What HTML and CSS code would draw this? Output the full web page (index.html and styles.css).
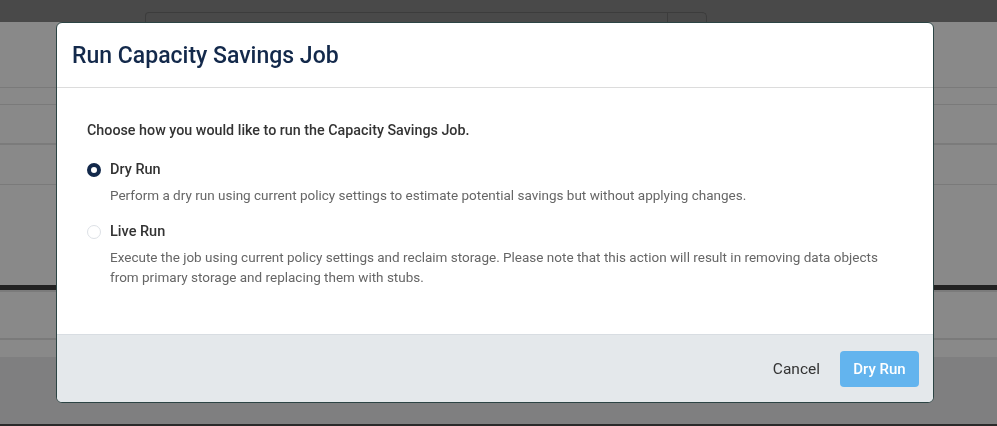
FILE: index.html
```html
<!DOCTYPE html>
<html lang="en">
<head>
    <meta charset="UTF-8">
    <meta name="viewport" content="width=device-width, initial-scale=1.0">
    <title>Run Capacity Savings Job</title>
    <link rel="stylesheet" href="styles.css">
</head>
<body>
    <!-- page behind the dialog -->
    <div class="app">
        <div class="topbar">
            <div class="search">
                <div class="search-field"></div>
                <div class="search-btn"></div>
            </div>
        </div>
        <div class="rows">
            <div class="row r1"></div>
            <div class="row r2"></div>
            <div class="row r3"></div>
            <div class="row r4"></div>
            <div class="row r5"></div>
            <div class="row r6"></div>
            <div class="row r7"></div>
        </div>
    </div>

    <!-- dialog -->
    <div class="overlay">
        <div class="modal">
            <div class="modal-header">
                <h2>Run Capacity Savings Job</h2>
            </div>
            <div class="modal-body">
                <p class="intro">Choose how you would like to run the Capacity Savings Job.</p>
                <label class="option">
                    <span class="radio checked"></span>
                    <span class="option-text">
                        <span class="option-title">Dry Run</span>
                        <span class="option-desc">Perform a dry run using current policy settings to estimate potential savings but without applying changes.</span>
                    </span>
                </label>
                <label class="option">
                    <span class="radio"></span>
                    <span class="option-text">
                        <span class="option-title">Live Run</span>
                        <span class="option-desc">Execute the job using current policy settings and reclaim storage. Please note that this action will result in removing data objects from primary storage and replacing them with stubs.</span>
                    </span>
                </label>
            </div>
            <div class="modal-footer">
                <button class="btn btn-link">Cancel</button>
                <button class="btn btn-primary">Dry Run</button>
            </div>
        </div>
    </div>
</body>
</html>
```

FILE: styles.css
```css
/* base */
body {
    margin: 0;
    font-family: Roboto, "Liberation Sans", Arial, sans-serif;
    background: #7f7f80;
    height: 426px;
    overflow: hidden;
}

/* background page (dimmed) */
.app {
    height: 424px;
    border-bottom: 2px solid #2a2a2a;
}
.topbar {
    height: 22px;
    background: #494949;
    box-sizing: border-box;
    padding: 12px 0 0 145px;
}
.search {
    display: flex;
    width: 562px;
    height: 10px;
}
.search-field {
    flex: 1;
    border: 1px solid #3c3c3c;
    border-bottom: none;
    border-radius: 4px 0 0 0;
}
.search-btn {
    width: 38px;
    border: 1px solid #3c3c3c;
    border-left: none;
    border-bottom: none;
    border-radius: 0 5px 0 0;
}
.rows { background: #898989; }
.row { box-sizing: border-box; border-bottom: 1px solid #7a7a7a; }
.r1 { height: 66px; }
.r2 { height: 17px; }
.r3 { height: 40px; border-bottom: 2px solid #7b7b7b; }
.r4 { height: 40px; }
.r5 { height: 105px; border-bottom: 5px solid #222; }
.r6 { height: 50px; border-top: 2px solid #7b7b7b; border-bottom: 2px solid #7a7a7a; }
.r7 { height: 17px; border-bottom: none; }

/* dialog */
.overlay {
    position: fixed;
    top: 22px;
    left: 56px;
}
.modal {
    width: 878px;
    height: 381px;
    box-sizing: border-box;
    background: #fff;
    border: 1px solid #2c4444;
    border-radius: 6px;
    overflow: hidden;
    display: flex;
    flex-direction: column;
}
.modal-header {
    height: 65px;
    box-sizing: border-box;
    padding: 0 15px;
    display: flex;
    align-items: center;
    border-bottom: 1px solid #dcdcdc;
}
.modal-header h2 {
    margin: 0;
    font-size: 23px;
    font-weight: 500;
    color: #13294b;
}
.modal-body {
    flex: 1;
    box-sizing: border-box;
    padding: 33px 30px 0;
}
.intro {
    margin: 0 0 21px;
    font-size: 14.3px;
    font-weight: 500;
    color: #333;
    line-height: 18px;
}
.option {
    display: flex;
    gap: 9px;
    margin-bottom: 17px;
}
.radio {
    flex: none;
    width: 14px;
    height: 14px;
    margin-top: 3px;
    box-sizing: border-box;
    border: 1px solid #dde1e6;
    border-radius: 50%;
}
.radio.checked {
    border: 4px solid #13294b;
    background: #fff;
}
.option-text { display: flex; flex-direction: column; }
.option-title {
    font-size: 14.5px;
    font-weight: 500;
    color: #333;
    line-height: 20px;
    margin-bottom: 5px;
}
.option-desc {
    font-size: 13.5px;
    color: #666;
    line-height: 20px;
    max-width: 780px;
}

/* footer */
.modal-footer {
    height: 68px;
    box-sizing: border-box;
    background: #e4e8eb;
    border-top: 1px solid #d8dde2;
    display: flex;
    justify-content: flex-end;
    align-items: center;
    padding: 0 14px 0 0;
    gap: 8px;
}
.btn {
    font-family: inherit;
    font-size: 15.5px;
    border: none;
    border-radius: 4px;
    height: 36px;
    padding: 0 12px;
    cursor: pointer;
}
.btn-link { background: none; color: #333; }
.btn-primary { background: #63b4ee; color: #fff; font-weight: 500; font-size: 15px; width: 79px; }
```
